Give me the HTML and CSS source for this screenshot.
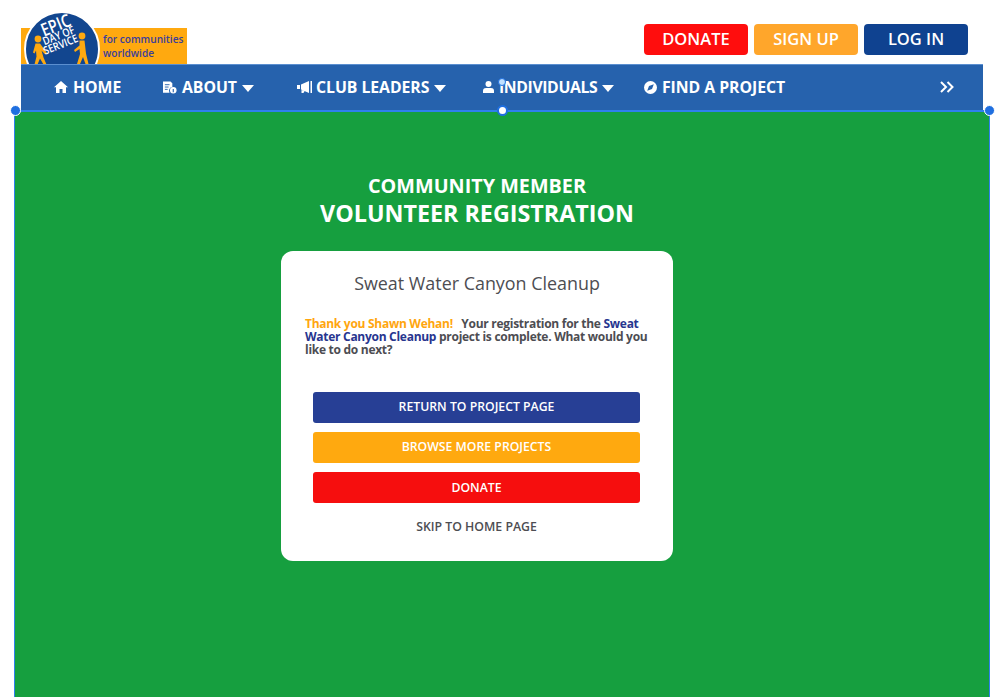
FILE: index.html
```html
<!DOCTYPE html>
<html lang="en">
<head>
  <meta charset="UTF-8" />
  <meta name="viewport" content="width=device-width, initial-scale=1.0"/>
  <title>Volunteer Registration</title>
  <link rel="stylesheet" href="styles.css">
</head>
<body>
  <!-- Logo and account buttons -->
  <header class="top-bar">
    <div class="logo">
      <svg class="logo-badge" width="80" height="53" viewBox="0 0 80 53">
        <circle cx="39" cy="38" r="37" fill="#12468f" stroke="#fff" stroke-width="2"/>
        <g fill="#ffa90f">
          <circle cx="15" cy="28" r="3.400"/>
          <path d="M12.500 32.500h4.500l7 9.500-1.800 1.500-3.700-4 2 7 3 7h-3l-3.500-6-2.500 6h-3l2-8-.5-6-1.500 3-1.500-1z"/>
          <circle cx="59" cy="25" r="3.400"/>
          <path d="M56.500 29.500h5l1.500 13 2.500 10.500h-3l-2.500-7-3 7h-3l3-10-.5-5-4.500 3-1-2 5.500-4.500z"/>
        </g>
        <g fill="#fff" font-family="'Open Sans', sans-serif" text-anchor="middle">
          <text class="logo-epic" transform="translate(35 20) rotate(-22) scale(.8 1)">EPIC</text>
          <text class="logo-small" transform="translate(37 28) rotate(-22) scale(.85 1)">DAY OF</text>
          <text class="logo-small" transform="translate(39 37) rotate(-22) scale(.85 1)">SERVICE</text>
        </g>
      </svg>
      <p class="logo-tag">for communities<br>worldwide</p>
    </div>
    <div class="top-buttons">
      <a class="top-btn red">DONATE</a>
      <a class="top-btn orange">SIGN UP</a>
      <a class="top-btn navy">LOG IN</a>
    </div>
  </header>

  <nav class="main-nav">
    <a class="nav-item nav-home">
      <svg class="nav-icon" width="14" height="12" viewBox="0 0 14 12"><path d="M7 0 0 6.200h2V12h3.500V8h3v4H12V6.200h2z" fill="#fff"/></svg>
      HOME
    </a>
    <a class="nav-item nav-about">
      <svg class="nav-icon" width="14" height="13" viewBox="0 0 15 13"><path d="M0 0h8l2 2v4a4 4 0 0 0-3 6H0z" fill="#fff"/><path d="M2 3.500h5M2 6h4M2 8.500h3" stroke="#2662ad" stroke-width="1"/><circle cx="11" cy="9.500" r="3.500" fill="#fff"/><path d="M11 8v3.500" stroke="#2662ad" stroke-width="1.200"/></svg>
      ABOUT
      <span class="caret"></span>
    </a>
    <a class="nav-item nav-leaders">
      <svg class="nav-icon" width="16" height="12" viewBox="0 0 16 12"><path d="M0 4h3v4H0zM4 3.500 12 0v12L4 8.500zM4.500 9l3 1-1 2h-2zM13.500 0H15v12h-1.500z" fill="#fff"/></svg>
      CLUB LEADERS
      <span class="caret"></span>
    </a>
    <a class="nav-item nav-individuals">
      <svg class="nav-icon" width="11" height="12" viewBox="0 0 11 12"><circle cx="5.500" cy="3" r="3" fill="#fff"/><path d="M0 12V9.500C0 7.800 1.500 7 3 7h5c1.500 0 3 .8 3 2.500V12z" fill="#fff"/></svg>
      INDIVIDUALS
      <span class="caret"></span>
    </a>
    <a class="nav-item nav-find">
      <svg class="nav-icon" width="13" height="13" viewBox="0 0 13 13"><circle cx="6.500" cy="6.500" r="6.500" fill="#fff"/><path d="M9.800 3.200 8 8 3.200 9.800 5 5z" fill="#2662ad"/></svg>
      FIND A PROJECT
    </a>
    <svg class="nav-more" width="14" height="12" viewBox="0 0 14 12"><path d="M1 1l5 5-5 5M7.500 1l5 5-5 5" fill="none" stroke="#fff" stroke-width="2"/></svg>
  </nav>

  <main class="green-panel">
    <h1 class="page-title"><span>COMMUNITY MEMBER</span>VOLUNTEER REGISTRATION</h1>

    <section class="card">
      <h2>Sweat Water Canyon Cleanup</h2>
      <p class="message">
        <span class="thanks">Thank you Shawn Wehan!</span>&nbsp;&nbsp; Your registration for the
        <span class="project">Sweat Water Canyon Cleanup</span> project is complete. What would you like to do next?
      </p>
      <div class="actions">
        <a class="action blue">RETURN TO PROJECT PAGE</a>
        <a class="action amber">BROWSE MORE PROJECTS</a>
        <a class="action scarlet">DONATE</a>
        <a class="skip">SKIP TO HOME PAGE</a>
      </div>
    </section>
  </main>

  <!-- Editor selection handles on the panel -->
  <span class="handle handle-left"></span>
  <span class="handle handle-mid"></span>
  <span class="handle handle-right"></span>
  <span class="handle handle-top"></span>
</body>
</html>
```

FILE: styles.css
```css
* {
  box-sizing: border-box;
}

html, body {
  height: 100%;
  overflow: hidden;
}

body {
  margin: 0;
  background-color: #fff;
  font-family: 'Open Sans', sans-serif;
  position: relative;
}

.top-bar {
  height: 64px;
  padding: 0 32px 0 21px;
  display: flex;
  justify-content: space-between;
}

.logo {
  position: relative;
  width: 166px;
  height: 36px;
  margin-top: 28px;
  background-color: #ffa90f;
  padding: 4px 0 0 82px;
}

.logo-badge {
  position: absolute;
  left: 2px;
  top: -17px;
}

.logo-epic {
  font-size: 18px;
  font-weight: 600;
}

.logo-small {
  font-size: 11px;
  font-weight: 600;
}

.logo-tag {
  margin: 0;
  color: #3b3f9c;
  font-size: 10.100px;
  font-weight: 600;
  line-height: 14px;
  white-space: nowrap;
}

.top-buttons {
  display: flex;
  gap: 6px;
  padding-top: 24px;
}

.top-btn {
  width: 104px;
  height: 31px;
  border-radius: 4px;
  color: #fff;
  font-size: 16.500px;
  font-weight: 600;
  line-height: 30px;
  text-align: center;
}

.red { background-color: #ff0d0d; }
.orange { background-color: #ffa62b; }
.navy { background-color: #0f4290; }

.main-nav {
  margin: 0 17px 0 21px;
  height: 46px;
  background-color: #2662ad;
  border-top: 1px solid #5b8fd0;
  position: relative;
  color: #fff;
}

.nav-item {
  position: absolute;
  top: -1px;
  height: 46px;
  display: flex;
  align-items: center;
  gap: 5px;
  font-size: 15.800px;
  font-weight: 700;
  letter-spacing: -0.050px;
  white-space: nowrap;
}

.nav-home { left: 33px; }
.nav-about { left: 142px; }
.nav-leaders { left: 276px; gap: 3px; }
.nav-leaders .caret { margin-left: 2px; }
.nav-individuals { left: 462px; letter-spacing: -0.400px; }
.nav-find { left: 623px; }

.caret {
  width: 0;
  height: 0;
  border-left: 6.500px solid transparent;
  border-right: 6.500px solid transparent;
  border-top: 7px solid #fff;
  margin-top: 2px;
}

.nav-more {
  position: absolute;
  left: 919px;
  top: 16px;
}

.green-panel {
  margin: 0 10px 0 14px;
  height: 587px;
  background-color: #169f3f;
  border: 1px solid #2f80ed;
  border-top-width: 2px;
  border-bottom: none;
  padding: 61px 50px 0 0;
  display: flex;
  flex-direction: column;
  align-items: center;
}

.page-title {
  margin: 0 0 23px;
  color: #fff;
  text-align: center;
  font-size: 23.300px;
  font-weight: 700;
  line-height: 30px;
}

.page-title span {
  display: block;
  font-size: 19.800px;
  line-height: 25px;
}

.card {
  width: 392px;
  height: 310px;
  padding: 20px 24px 0 24px;
  background-color: #fff;
  border-radius: 12px;
}

.card h2 {
  margin: 0;
  color: #4d4d52;
  font-size: 17.900px;
  font-weight: 400;
  line-height: 25px;
  text-align: center;
}

.message {
  margin: 21px 0 0;
  color: #4d4d52;
  font-size: 12px;
  font-weight: 700;
  line-height: 13px;
  letter-spacing: -0.280px;
}

.thanks { color: #ffa60f; }
.project { color: #27358f; }

.actions {
  margin: 35.500px 9px 0 8px;
  display: flex;
  flex-direction: column;
  gap: 9px;
}

.action {
  height: 31px;
  border-radius: 3px;
  color: #fff;
  font-size: 12.250px;
  font-weight: 600;
  line-height: 29px;
  text-align: center;
}

.blue { background-color: #273f95; }
.amber { background-color: #ffa90f; }
.scarlet { background-color: #f60e0e; line-height: 31px; }

.skip {
  margin-top: 6px;
  color: #4d4d52;
  font-size: 12.300px;
  font-weight: 600;
  text-align: center;
}

.handle {
  position: absolute;
  width: 11px;
  height: 11px;
  border-radius: 50%;
  background-color: #1f6fe0;
  border: 1.500px solid #fff;
}

.handle-left { left: 10px; top: 105px; }
.handle-mid { left: 497px; top: 105px; background-color: #fff; border: 2px solid #1f6fe0; }
.handle-right { left: 984px; top: 105px; }
.handle-top { left: 498px; top: 78px; width: 8px; height: 8px; background-color: #bfe0ff; border: 1px solid #1f6fe0; }
```
